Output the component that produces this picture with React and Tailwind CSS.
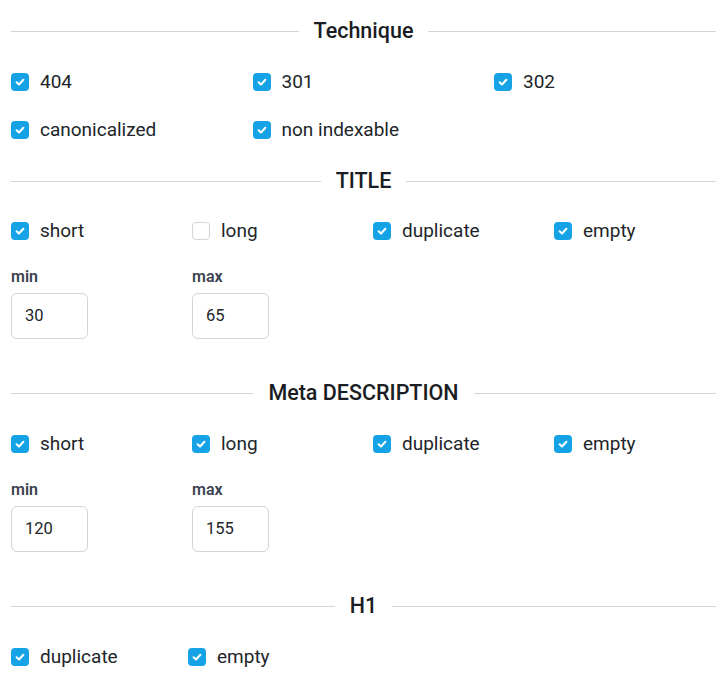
import React from "react";

function Check({ checked, label }) {
  return (
    <div className="flex items-center h-[24px]">
      {checked ? (
        <span className="w-[18px] h-[18px] rounded-[4px] bg-[#16a3e6] flex items-center justify-center shrink-0">
          <svg width="12" height="12" viewBox="0 0 12 12" fill="none">
            <path d="M2.6 6.2 L5 8.5 L9.4 3.8" stroke="white" strokeWidth="2" strokeLinecap="round" strokeLinejoin="round" />
          </svg>
        </span>
      ) : (
        <span className="w-[18px] h-[18px] rounded-[4px] bg-white border border-[#d1d5db] shrink-0" />
      )}
      <span className="ml-[11px] text-[19px] text-[#212529] leading-[24px]">{label}</span>
    </div>
  );
}

function Divider({ title, className = "" }) {
  return (
    <div className={"flex items-center h-[24px] " + className}>
      <div className="flex-1 h-px bg-[#d4d4d8]" />
      <span className="px-[15px] text-[21.5px] font-medium text-[#1a1d23] leading-[24px]">{title}</span>
      <div className="flex-1 h-px bg-[#d4d4d8]" />
    </div>
  );
}

function Field({ label, value }) {
  return (
    <div className="flex flex-col">
      <span className="text-[16px] font-semibold text-[#3b4250] leading-[20px]">{label}</span>
      <div className="mt-[6px] w-[77px] h-[46px] rounded-[6px] border border-[#d1d5db] bg-white flex items-center pl-[13px] text-[16.5px] text-[#212529]">
        {value}
      </div>
    </div>
  );
}

export default function App() {
  return (
    <div className="w-[727px] h-[682px] bg-white overflow-hidden px-[11px] pt-[19px]" style={{ fontFamily: "Roboto, 'Liberation Sans', sans-serif" }}>
      <Divider title="Technique" />
      <div className="mt-[27px] grid grid-cols-[241.5px_241.5px_222px] gap-y-[24px]">
        <Check checked label="404" />
        <Check checked label="301" />
        <Check checked label="302" />
        <Check checked label="canonicalized" />
        <Check checked label="non indexable" />
      </div>

      <Divider title="TITLE" className="mt-[27px]" />
      <div className="mt-[26px] grid grid-cols-[181px_181px_181px_162px]">
        <Check checked label="short" />
        <Check checked={false} label="long" />
        <Check checked label="duplicate" />
        <Check checked label="empty" />
      </div>
      <div className="mt-[24px] flex">
        <div className="w-[181px]"><Field label="min" value="30" /></div>
        <div className="w-[181px]"><Field label="max" value="65" /></div>
      </div>

      <Divider title="Meta DESCRIPTION" className="mt-[42px]" />
      <div className="mt-[27px] grid grid-cols-[181px_181px_181px_162px]">
        <Check checked label="short" />
        <Check checked label="long" />
        <Check checked label="duplicate" />
        <Check checked label="empty" />
      </div>
      <div className="mt-[24px] flex">
        <div className="w-[181px]"><Field label="min" value="120" /></div>
        <div className="w-[181px]"><Field label="max" value="155" /></div>
      </div>

      <Divider title="H1" className="mt-[42px]" />
      <div className="mt-[27px] flex">
        <div className="w-[177px]"><Check checked label="duplicate" /></div>
        <Check checked label="empty" />
      </div>
    </div>
  );
}
